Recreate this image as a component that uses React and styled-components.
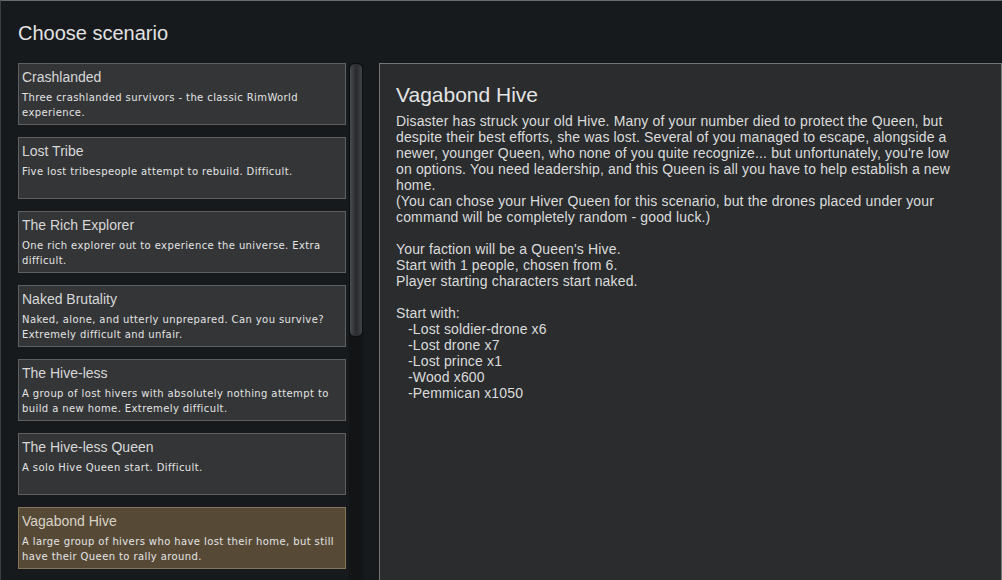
import React from "react";
import styled, { createGlobalStyle } from "styled-components";

const Global = createGlobalStyle`
  html, body { margin: 0; padding: 0; background: #171a1d; overflow: hidden; }
  * { box-sizing: border-box; }
`;

const Window = styled.div`
  width: 1002px;
  height: 580px;
  background: #171a1d;
  border-top: 1px solid #6a6d70;
  border-left: 1px solid #3b3e41;
  padding: 20px 0 0 17px;
  display: flex;
  flex-direction: column;
  overflow: hidden;
`;

const Title = styled.h1`
  margin: 0 0 18px 0;
  font-family: "Liberation Sans", Arial, sans-serif;
  font-weight: normal;
  font-size: 20px;
  line-height: 24px;
  color: #e2e2e2;
`;

const Content = styled.div`
  display: flex;
  flex: 1;
  min-height: 0;
`;

const List = styled.div`
  width: 328px;
  display: flex;
  flex-direction: column;
  gap: 12px;
  overflow: hidden;
`;

const Card = styled.div`
  flex: 0 0 62px;
  height: 62px;
  background: ${(p) => (p.$selected ? "#564a37" : "#333537")};
  border: 1px solid ${(p) => (p.$selected ? "#857659" : "#5e6062")};
  padding: 5px 3px 0 3px;
`;

const CardTitle = styled.div`
  font-family: "Liberation Sans", Arial, sans-serif;
  font-size: 14px;
  line-height: 16px;
  color: ${(p) => (p.$selected ? "#d9d3c6" : "#d8d8d8")};
`;

const CardDesc = styled.div`
  margin-top: 5px;
  font-family: "DejaVu Sans", "Noto Sans", sans-serif;
  font-size: 10px;
  line-height: 15px;
  letter-spacing: 0.4px;
  color: #e4e4e4;
`;

const ScrollColumn = styled.div`
  width: 33px;
  display: flex;
  padding-left: 3px;
`;

const Track = styled.div`
  width: 14px;
  background: #121416;
  display: flex;
  flex-direction: column;
`;

const Thumb = styled.div`
  height: 274px;
  border: 1px solid #0b0d0f;
  border-radius: 6px;
  background: linear-gradient(90deg, #4a4d50 0%, #2b2d2f 45%, #2b2d2f 60%, #43464a 100%);
`;

const Panel = styled.div`
  flex: 1;
  background: #2a2c2e;
  border: 1px solid #737577;
  border-bottom: none;
  padding: 18px 16px 0 16px;
`;

const PanelTitle = styled.h2`
  margin: 0 0 5px 0;
  font-family: "Liberation Sans", Arial, sans-serif;
  font-weight: normal;
  font-size: 21px;
  line-height: 26px;
  color: #e4e4e4;
  white-space: nowrap;
`;

const Body = styled.div`
  font-family: "Liberation Sans", Arial, sans-serif;
  font-size: 14px;
  line-height: 16px;
  letter-spacing: 0.15px;
  color: #dcdcdc;
`;

const Line = styled.div`
  height: 16px;
  white-space: pre;
  padding-left: ${(p) => (p.$indent ? "12px" : "0")};
`;

const scenarios = [
  { title: "Crashlanded", desc: "Three crashlanded survivors - the classic RimWorld experience." },
  { title: "Lost Tribe", desc: "Five lost tribespeople attempt to rebuild. Difficult." },
  { title: "The Rich Explorer", desc: "One rich explorer out to experience the universe. Extra difficult." },
  { title: "Naked Brutality", desc: "Naked, alone, and utterly unprepared. Can you survive? Extremely difficult and unfair." },
  { title: "The Hive-less", desc: "A group of lost hivers with absolutely nothing attempt to build a new home. Extremely difficult." },
  { title: "The Hive-less Queen", desc: "A solo Hive Queen start. Difficult." },
  { title: "Vagabond Hive", desc: "A large group of hivers who have lost their home, but still have their Queen to rally around.", selected: true },
];

const lines = [
  "Disaster has struck your old Hive. Many of your number died to protect the Queen, but",
  "despite their best efforts, she was lost. Several of you managed to escape, alongside a",
  "newer, younger Queen, who none of you quite recognize... but unfortunately, you're low",
  "on options. You need leadership, and this Queen is all you have to help establish a new",
  "home.",
  "(You can chose your Hiver Queen for this scenario, but the drones placed under your",
  "command will be completely random - good luck.)",
  "",
  "Your faction will be a Queen's Hive.",
  "Start with 1 people, chosen from 6.",
  "Player starting characters start naked.",
  "",
  "Start with:",
  { t: "-Lost soldier-drone x6", i: true },
  { t: "-Lost drone x7", i: true },
  { t: "-Lost prince x1", i: true },
  { t: "-Wood x600", i: true },
  { t: "-Pemmican x1050", i: true },
];

export default function App() {
  return (
    <>
      <Global />
      <Window>
        <Title>Choose scenario</Title>
        <Content>
          <List>
            {scenarios.map((s) => (
              <Card key={s.title} $selected={s.selected}>
                <CardTitle $selected={s.selected}>{s.title}</CardTitle>
                <CardDesc>{s.desc}</CardDesc>
              </Card>
            ))}
          </List>
          <ScrollColumn>
            <Track>
              <Thumb />
            </Track>
          </ScrollColumn>
          <Panel>
            <PanelTitle>Vagabond Hive</PanelTitle>
            <Body>
              {lines.map((l, idx) =>
                typeof l === "string" ? (
                  <Line key={idx}>{l}</Line>
                ) : (
                  <Line key={idx} $indent={l.i}>{l.t}</Line>
                )
              )}
            </Body>
          </Panel>
        </Content>
      </Window>
    </>
  );
}
